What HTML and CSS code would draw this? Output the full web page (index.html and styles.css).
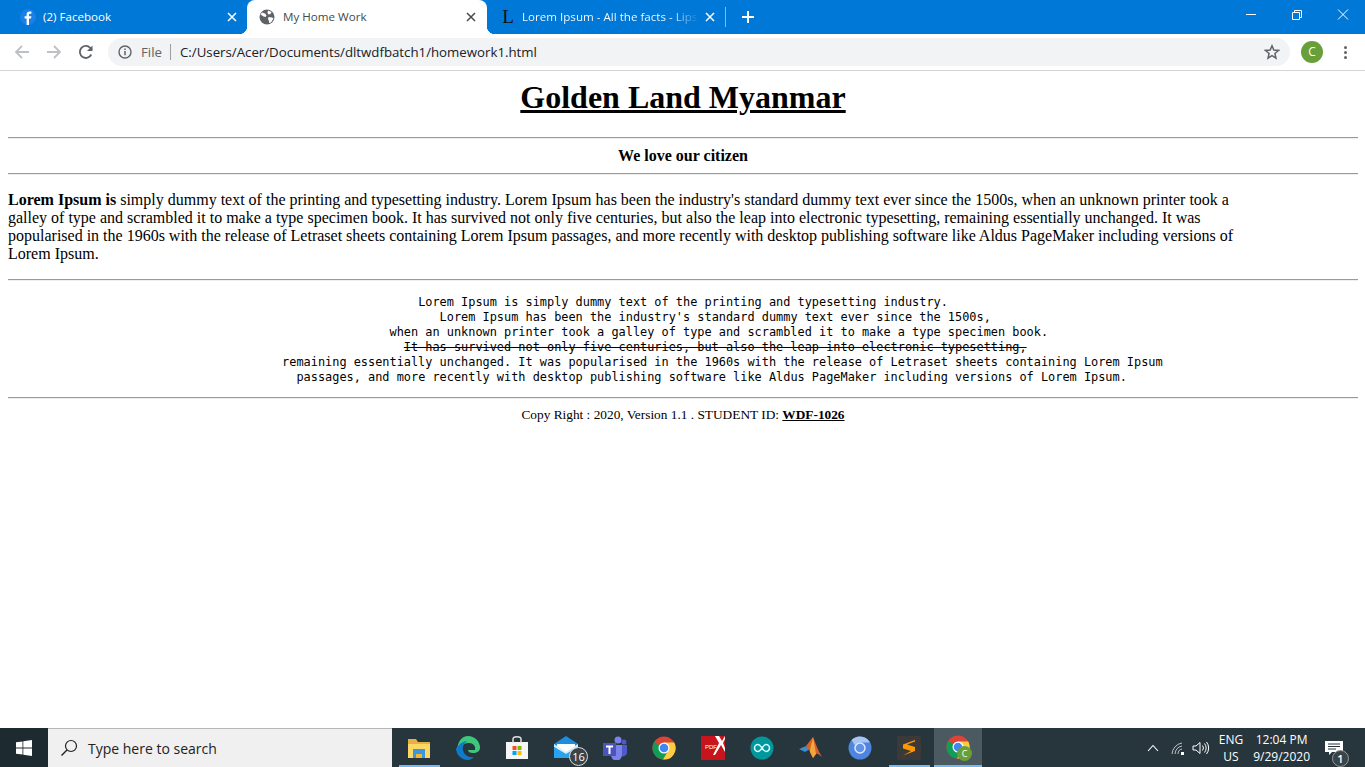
FILE: index.html
```html
<!DOCTYPE html>
<html lang="en">

<head>
    <meta charset="UTF-8">
    <meta name="viewport" content="width=device-width, initial-scale=1.0">
    <title>My Home Work</title>
    <link rel="stylesheet" href="styles.css">
</head>

<body>
    <div class="tabstrip">
        <div class="tab">
            <svg class="favicon" viewBox="0 0 16 16"><circle cx="8" cy="8" r="8" fill="#1a7fe8"/><path d="M9 16V9.6h2l.4-2.4H9V5.9c0-.8.3-1.2 1.2-1.2h1.2V2.600c-.5-.1-1.100-.1-1.700-.1-1.900 0-3.100 1.100-3.100 3.100v1.600H4.600v2.400h2V16z" fill="#fff"/></svg>
            <span class="tab-title">(2) Facebook</span>
            <svg class="tab-close" viewBox="0 0 10 10"><path d="M1 1l8 8M9 1l-8 8" stroke="#fff" stroke-width="1.500"/></svg>
        </div>
        <div class="tab active">
            <svg class="favicon" viewBox="0 0 16 16"><circle cx="8" cy="8" r="7.500" fill="#5f6368"/><path d="M3 3.500l3 1 1.500 2-1 1.500-2-.5-3-2zM9 1.500l3.500 1.500-1 2-2 .5-1-1.500zM9.500 8l3.500.5 1.500 1-2.500 4-2 .5V12l-1-2z" fill="#fff"/></svg>
            <span class="tab-title">My Home Work</span>
            <svg class="tab-close" viewBox="0 0 10 10"><path d="M1 1l8 8M9 1l-8 8" stroke="#45494d" stroke-width="1.500"/></svg>
        </div>
        <div class="tab last">
            <span class="favicon lipsum-icon">L</span>
            <span class="tab-title fade">Lorem Ipsum - All the facts - Lipsum</span>
            <svg class="tab-close" viewBox="0 0 10 10"><path d="M1 1l8 8M9 1l-8 8" stroke="#fff" stroke-width="1.500"/></svg>
        </div>
        <div class="tab-sep"></div>
        <svg class="new-tab" viewBox="0 0 12 12"><path d="M6 0v12M0 6h12" stroke="#fff" stroke-width="2"/></svg>
        <div class="win-buttons">
            <svg class="win-btn" viewBox="0 0 46 30"><path d="M19 14.500h10" stroke="#fff"/></svg>
            <svg class="win-btn" viewBox="0 0 46 30"><path d="M19.500 12.500h7v7h-7zM21.500 12.500v-2h7v7h-2" fill="none" stroke="#fff"/></svg>
            <svg class="win-btn" viewBox="0 0 46 30"><path d="M19 9.500l10 10M29 9.500l-10 10" stroke="#fff"/></svg>
        </div>
    </div>

    <div class="toolbar">
        <svg class="tool-icon" viewBox="0 0 16 16"><path d="M15 8H2.500M8 2L2 8l6 6" fill="none" stroke="#bdc0c4" stroke-width="1.800"/></svg>
        <svg class="tool-icon" viewBox="0 0 16 16"><path d="M1 8h12.500M8 2l6 6-6 6" fill="none" stroke="#bdc0c4" stroke-width="1.800"/></svg>
        <svg class="tool-icon" viewBox="0 0 16 16"><path d="M13.300 10.500A6 6 0 1 1 12.200 3.800L14 5.600" fill="none" stroke="#5f6368" stroke-width="1.800"/><path d="M14.500 1.500v5.500H9z" fill="#5f6368"/></svg>
        <div class="omnibox">
            <svg class="info-icon" viewBox="0 0 14 14"><circle cx="7" cy="7" r="6" fill="none" stroke="#5f6368" stroke-width="1.400"/><path d="M7 6v4.200M7 3.500v1.400" stroke="#5f6368" stroke-width="1.500"/></svg>
            <span class="scheme">File</span>
            <span class="omni-sep"></span>
            <span class="url">C:/Users/Acer/Documents/dltwdfbatch1/homework1.html</span>
            <svg class="star" viewBox="0 0 16 16"><path d="M8 1.800l1.800 4.300 4.700.4-3.600 3 1.100 4.600L8 11.700l-4 2.400 1.100-4.600-3.600-3 4.700-.4z" fill="none" stroke="#5f6368" stroke-width="1.500"/></svg>
        </div>
        <div class="avatar">C</div>
        <div class="kebab"><i></i><i></i><i></i></div>
    </div>

    <main class="page">
        <h1 class="title">Golden Land Myanmar</h1>
        <hr>
        <h4 class="motto">We love our citizen</h4>
        <hr>
        <p class="intro"><b>Lorem Ipsum is</b> simply dummy text of the printing and typesetting industry. Lorem Ipsum has been the industry's standard dummy text ever since the 1500s, when an unknown printer took a galley of type and scrambled it to make a type specimen book. It has survived not only five centuries, but also the leap into electronic typesetting, remaining essentially unchanged. It was popularised in the 1960s with the release of Letraset sheets containing Lorem Ipsum passages, and more recently with desktop publishing software like Aldus PageMaker including versions of Lorem Ipsum.</p>
        <hr>
<pre class="poem">Lorem Ipsum is simply dummy text of the printing and typesetting industry.
         Lorem Ipsum has been the industry's standard dummy text ever since the 1500s,
          when an unknown printer took a galley of type and scrambled it to make a type specimen book.
         <s>It has survived not only five centuries, but also the leap into electronic typesetting,</s>
           remaining essentially unchanged. It was popularised in the 1960s with the release of Letraset sheets containing Lorem Ipsum
        passages, and more recently with desktop publishing software like Aldus PageMaker including versions of Lorem Ipsum.</pre>
        <hr>
        <p class="footer-line">Copy Right : 2020, Version 1.1 . STUDENT ID: <b><u>WDF-1026</u></b></p>
    </main>

    <div class="taskbar">
        <div class="start">
            <svg width="16" height="16" viewBox="0 0 16 16"><path d="M0 2.300l6.500-.9v6.200H0zM7.300 1.300L16 0v7.600H7.300zM0 8.400h6.500v6.200L0 13.700zM7.300 8.400H16V16l-8.700-1.300z" fill="#fff"/></svg>
        </div>
        <div class="search">
            <svg width="18" height="18" viewBox="0 0 18 18"><circle cx="11" cy="7" r="5.500" fill="none" stroke="#222" stroke-width="1.200"/><path d="M7 11l-5.500 5.500" stroke="#222" stroke-width="1.400"/></svg>
            <span>Type here to search</span>
        </div>
        <div class="apps">
            <div class="app running">
                <svg viewBox="0 0 24 24"><path d="M1 3h8l2 3h12v16H1z" fill="#e5b143"/><path d="M1 8h22v14H1z" fill="#fcd765"/><path d="M6 13h12v9h-3v-4H9v4H6z" fill="#3a96dd"/><path d="M9 18h6v4H9z" fill="#f2b632"/></svg>
            </div>
            <div class="app">
                <svg viewBox="0 0 24 24"><path d="M12 0a12 12 0 0 1 12 12c0 3-3 5-7 5-3 0-5-1-5-3h7c1-4-2-7-6-7-5 0-8 2-12 7C2 5 6 0 12 0z" fill="#3fc67d"/><path d="M1 12c2-4 6-7 11-7-3 1-6 5-5 9 1 5 6 8 11 7-2 2-4 3-6 3A12 12 0 0 1 0 12z" fill="#0f7ac6"/></svg>
            </div>
            <div class="app">
                <svg viewBox="0 0 24 24"><path d="M1 6h22v17H1z" fill="#f5f5f5"/><path d="M8 7V3c0-3 8-3 8 0v4" fill="none" stroke="#e0e0e0" stroke-width="1.500"/><path d="M7.500 10h4v4h-4z" fill="#f25022"/><path d="M12.500 10h4v4h-4z" fill="#7fba00"/><path d="M7.500 15h4v4h-4z" fill="#00a4ef"/><path d="M12.500 15h4v4h-4z" fill="#ffb900"/></svg>
            </div>
            <div class="app">
                <svg viewBox="0 0 24 24"><path d="M0 8l12-8 12 8v14H0z" fill="#1b8ee0"/><path d="M3 8h18v5l-9 5-9-5z" fill="#fff"/><path d="M0 8l12 8 12-8v3l-12 7-12-7z" fill="#d7ecfb"/><path d="M0 11l12 7 12-7v11H0z" fill="#29a3ec"/></svg>
                <span class="badge">16</span>
            </div>
            <div class="app">
                <svg viewBox="0 0 24 24"><circle cx="15" cy="4" r="3.500" fill="#7b83eb"/><circle cx="21" cy="6" r="2.500" fill="#5059c9"/><path d="M17 9h7v8a4 4 0 0 1-7 2z" fill="#5059c9"/><path d="M8 9h11v10a5 5 0 0 1-11 0z" fill="#7b83eb"/><path d="M0 7h13v13H0z" fill="#4b53bc"/><path d="M3 9.500h7v2H7.500v6.500h-2v-6.500H3z" fill="#fff"/></svg>
            </div>
            <div class="app">
                <svg viewBox="0 0 24 24" class="chrome"><use href="#chrome-logo"/></svg>
            </div>
            <div class="app">
                <svg viewBox="0 0 24 24"><path d="M0 0h24v24H0z" fill="#c8141c"/><path d="M14 0h4l3 5 3-5v3l-2 4 2 5v4l-4-7-6 10h-2l6-12z" fill="#fff"/><text x="4" y="13" class="pdf-label">PDF</text></svg>
            </div>
            <div class="app">
                <svg viewBox="0 0 24 24"><circle cx="12" cy="12" r="11.500" fill="#00979d"/><path d="M8 8.500a3.500 3.500 0 1 0 0 7c3 0 5-7 8-7a3.500 3.500 0 1 1 0 7c-3 0-5-7-8-7z" fill="none" stroke="#dff" stroke-width="1.500"/></svg>
            </div>
            <div class="app">
                <svg viewBox="0 0 24 24"><path d="M0 13l7-3 4 3-5 3z" fill="#3d8dd0"/><path d="M7 10l7-9c3 7 5 14 9 20-3-2-4-4-6-3-1 1-2 3-3 4-2-4-4-9-7-12z" fill="#d9602a"/><path d="M14 1c-1 6-3 10-3 15l3 6c1-1 2-3 3-4-1-6-2-12-3-17z" fill="#f4a63a"/></svg>
            </div>
            <div class="app">
                <svg viewBox="0 0 24 24"><circle cx="12" cy="12" r="11.500" fill="#4d86e0"/><path d="M12 .5a11.500 11.500 0 0 1 10 6H12a5.500 5.500 0 0 0-5 3L3.500 4A11.500 11.500 0 0 1 12 .5z" fill="#a8c4f0"/><circle cx="12" cy="12" r="5" fill="#5f93e8" stroke="#dfe9fa" stroke-width="1.500"/></svg>
            </div>
            <div class="app running">
                <svg viewBox="0 0 24 24"><rect width="24" height="24" rx="2" fill="#3c3a38"/><path d="M18 4L6 8.500v4l8 2.500-8 4.500 12-4.500v-4l-8-2.500 8-3z" fill="#ff9800"/></svg>
            </div>
            <div class="app current">
                <svg viewBox="0 0 24 24" class="chrome"><use href="#chrome-logo"/></svg>
                <span class="profile-badge">C</span>
            </div>
        </div>
        <div class="tray">
            <svg class="tray-icon" width="12" height="8" viewBox="0 0 12 8"><path d="M1 7l5-5.500L11 7" fill="none" stroke="#fff" stroke-width="1.100"/></svg>
            <svg class="tray-icon wifi" width="14" height="14" viewBox="0 0 14 14"><path d="M1 13A12 12 0 0 1 11 2M4 13a9 9 0 0 1 7-8M7 13a5 5 0 0 1 4-5" fill="none" stroke="#cfd3d5" stroke-width=".9"/><path d="M10 11h3v3h-3z" fill="#fff"/></svg>
            <svg class="tray-icon" width="18" height="14" viewBox="0 0 18 14"><path d="M1 5v4h3l4 3.500v-11L4 5z" fill="none" stroke="#fff"/><path d="M10.500 4.500a4 4 0 0 1 0 5M12.500 2.500a7 7 0 0 1 0 9M14.500 1a9.500 9.500 0 0 1 0 12" fill="none" stroke="#fff"/></svg>
            <div class="lang"><span>ENG</span><span>US</span></div>
            <div class="clock"><span>12:04 PM</span><span>9/29/2020</span></div>
            <div class="notify">
                <svg width="18" height="14" viewBox="0 0 18 14"><path d="M0 0h18v11H7l-3 3v-3H0z" fill="#fff"/><path d="M3 3h12M3 5.500h12M3 8h8" stroke="#26343b"/></svg>
                <span class="notify-count">1</span>
            </div>
        </div>
    </div>

    <svg class="defs" width="0" height="0">
        <defs>
            <g id="chrome-logo">
                <circle cx="12" cy="12" r="11.500" fill="#db4437"/>
                <path d="M12 12L2.200 6A11.500 11.500 0 0 0 11 23.500l6-10z" fill="#0f9d58"/>
                <path d="M12 6.500h10.200A11.500 11.500 0 0 1 11 23.500l6-10z" fill="#ffcd40"/>
                <circle cx="12" cy="12" r="5.500" fill="#fff"/>
                <circle cx="12" cy="12" r="4.300" fill="#4285f4"/>
            </g>
        </defs>
    </svg>
</body>

</html>
```

FILE: styles.css
```css
* {
    box-sizing: border-box;
}

html,
body {
    margin: 0;
    padding: 0;
    height: 100%;
}

body {
    display: flex;
    flex-direction: column;
    height: 767px;
    overflow: hidden;
    background: #fff;
    font-family: "Liberation Serif", serif;
    color: #000;
}

/* browser tabs */
.tabstrip {
    display: flex;
    align-items: center;
    height: 34px;
    flex: none;
    background: #0078d7;
    color: #fff;
    font-family: "Open Sans", sans-serif;
    font-size: 11.6px;
}

.tab {
    display: flex;
    align-items: center;
    width: 240px;
    height: 34px;
    padding: 0 10px 0 20px;
}

.tab:first-child {
    width: 247px;
}

.tab.active {
    position: relative;
    padding-left: 12px;
    background: #fff;
    color: #45494d;
    border-radius: 8px 8px 0 0;
    padding-right: 11px;
}

/* the little flares at the foot of the active tab */
.tab.active::before,
.tab.active::after {
    content: "";
    position: absolute;
    bottom: 0;
    width: 8px;
    height: 8px;
}

.tab.active::before {
    left: -8px;
    background: radial-gradient(circle at 0 0, #0078d7 8px, #fff 8.500px);
}

.tab.active::after {
    right: -8px;
    background: radial-gradient(circle at 100% 0, #0078d7 8px, #fff 8.500px);
}

.tab.last {
    width: 238px;
    padding-left: 13px;
    padding-right: 10px;
}

.favicon {
    flex: none;
    width: 16px;
    height: 16px;
    margin-right: 7px;
}

.lipsum-icon {
    color: #111;
    font-family: "Liberation Serif", serif;
    font-size: 19px;
    line-height: 16px;
    text-align: center;
    margin-right: 6px;
}

.tab-title {
    flex: 1;
    overflow: hidden;
    white-space: nowrap;
    margin-bottom: 2px;
}

.tab.active .tab-title {
    margin-left: 1px;
}

.tab-title.fade {
    color: transparent;
    background: linear-gradient(90deg, #fff 84%, #0078d7 100%);
    -webkit-background-clip: text;
    background-clip: text;
}

.tab-close {
    flex: none;
    width: 10px;
    height: 10px;
    margin-left: 6px;
}

.tab-sep {
    width: 1px;
    height: 20px;
    background: #7fbbeb;
}

.new-tab {
    width: 12px;
    height: 12px;
    margin-left: 16px;
}

.win-buttons {
    display: flex;
    margin-left: auto;
    align-self: flex-start;
}

.win-btn {
    width: 46px;
    height: 30px;
}

/* address bar */
.toolbar {
    display: flex;
    align-items: center;
    flex: none;
    height: 37px;
    padding: 0 18px 0 14px;
    background: #fff;
    border-bottom: 1px solid #d4d5d7;
}

.tool-icon {
    flex: none;
    width: 16px;
    height: 16px;
    margin-right: 16px;
}

.omnibox {
    display: flex;
    align-items: center;
    flex: 1;
    height: 28px;
    margin-left: -2px;
    padding: 0 10px;
    background: #f1f3f4;
    border-radius: 14px;
    font-family: "Open Sans", sans-serif;
    font-size: 13.250px;
}

.info-icon {
    width: 14px;
    height: 14px;
    margin-right: 9px;
}

.scheme {
    color: #5f6368;
}

.omni-sep {
    width: 1px;
    height: 16px;
    margin: 0 9px 0 8px;
    background: #9aa0a6;
}

.url {
    color: #202124;
}

.star {
    width: 16px;
    height: 16px;
    margin-left: auto;
}

.avatar {
    width: 22px;
    height: 22px;
    margin-left: 11px;
    border-radius: 50%;
    background: #689f38;
    color: #fff;
    font-family: "Open Sans", sans-serif;
    font-size: 12px;
    line-height: 22px;
    text-align: center;
}

.kebab {
    display: flex;
    flex-direction: column;
    gap: 2px;
    margin-left: 21px;
}

.kebab i {
    width: 3px;
    height: 3px;
    background: #5f6368;
    border-radius: 50%;
}

/* the page itself */
.page {
    flex: 1;
    padding: 8px 7px 8px 8px;
}

hr {
    margin: 8px 0;
    border: 0;
    border-top: 1px solid #9a9a9a;
    border-bottom: 1px solid #eee;
}

.title {
    margin: 0 0 21px;
    font-size: 32px;
    line-height: 37px;
    text-align: center;
    text-decoration: underline;
}

.motto {
    margin: 0;
    font-size: 16px;
    line-height: 18px;
    text-align: center;
}

.intro {
    width: 1240px;
    margin: 16px 0;
    font-size: 16px;
    line-height: 18px;
}

.poem {
    margin: 14px 0 12px;
    font-family: "DejaVu Sans Mono", monospace;
    font-size: 11.9px;
    line-height: 15px;
    text-align: center;
}

.footer-line {
    margin: 0;
    font-size: 13.333px;
    line-height: 16px;
    text-align: center;
}

/* windows taskbar */
.taskbar {
    display: flex;
    align-items: stretch;
    flex: none;
    height: 39px;
    background: #27353c;
    color: #fff;
}

.start {
    display: flex;
    align-items: center;
    justify-content: center;
    width: 48px;
    background: #1d2a30;
}

.search {
    display: flex;
    align-items: center;
    width: 344px;
    padding-left: 12px;
    background: #f0f0f0;
    border-top: 1px solid #b5b8ba;
    color: #222;
    font-family: "Open Sans", sans-serif;
    font-size: 14px;
}

.search span {
    margin-left: 10px;
}

.apps {
    display: flex;
    margin-left: 3px;
}

.app {
    position: relative;
    display: flex;
    align-items: center;
    justify-content: center;
    width: 49px;
}

.app svg {
    width: 24px;
    height: 24px;
    margin-right: 2px;
}

.pdf-label {
    fill: #fff;
    font-family: "Liberation Sans", sans-serif;
    font-size: 6px;
}

.app.running::after {
    content: "";
    position: absolute;
    left: 4px;
    right: 4px;
    bottom: 0;
    height: 2px;
    background: #76b9ed;
}

.app.current {
    width: 48px;
    background: #4b5a60;
    border-bottom: 2px solid #76b9ed;
}

.app.current svg {
    margin-right: 0;
}

.badge {
    position: absolute;
    right: 3px;
    bottom: 1px;
    width: 19px;
    height: 19px;
    border: 1px solid #ddd;
    border-radius: 50%;
    background: #3b4449;
    font-family: "Open Sans", sans-serif;
    font-size: 11px;
    line-height: 17px;
    text-align: center;
}

.profile-badge {
    position: absolute;
    right: 10px;
    bottom: 4px;
    width: 15px;
    height: 15px;
    border-radius: 50%;
    background: #689f38;
    font-family: "Open Sans", sans-serif;
    font-size: 9px;
    line-height: 15px;
    text-align: center;
}

.tray {
    display: flex;
    align-items: center;
    margin-left: auto;
    font-family: "Open Sans", sans-serif;
    font-size: 12px;
}

.tray-icon {
    margin-right: 7px;
}

.tray-icon.wifi {
    margin-left: 5px;
}

.lang,
.clock {
    display: flex;
    flex-direction: column;
    align-items: center;
    line-height: 17px;
}

.lang {
    margin-left: 2px;
}

.clock {
    margin-left: 10px;
}

.notify {
    position: relative;
    width: 46px;
    margin-left: 9px;
    padding-left: 6px;
}

.notify svg {
    display: block;
}

.notify-count {
    position: absolute;
    left: 13px;
    top: 9px;
    width: 17px;
    height: 17px;
    border: 1px solid #999;
    border-radius: 50%;
    background: #3b4449;
    font-size: 11px;
    font-weight: 600;
    line-height: 15px;
    text-align: center;
}

.defs {
    position: absolute;
}
```
